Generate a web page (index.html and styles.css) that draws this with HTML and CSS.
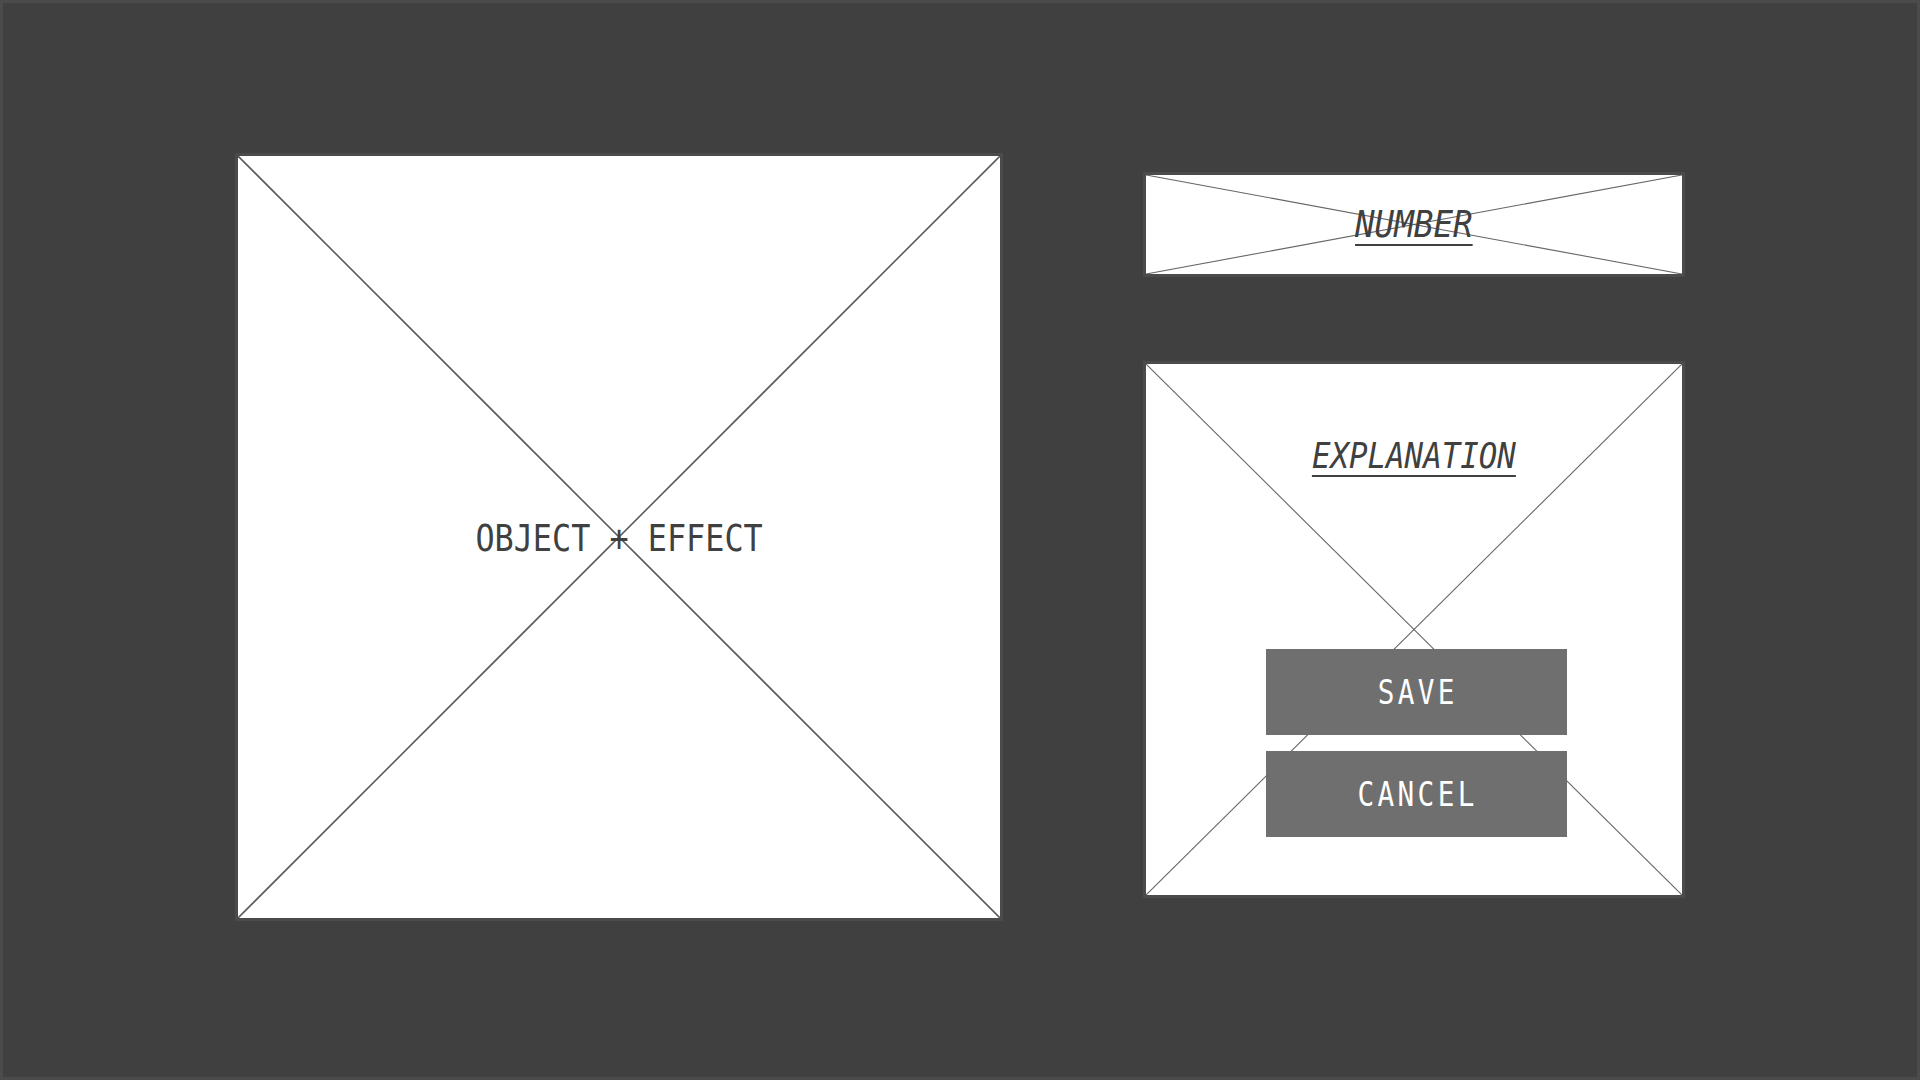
FILE: index.html
```html
<!DOCTYPE html>
<html lang="en">
<head>
    <meta charset="UTF-8">
    <meta name="viewport" content="width=device-width, initial-scale=1.0">
    <title>Object + Effect</title>
    <link rel="stylesheet" href="styles.css">
</head>
<body>
    <main class="canvas">
        <section class="frame frame-big">
            <svg class="cross" viewBox="0 0 100 100" preserveAspectRatio="none">
                <line x1="0" y1="0" x2="100" y2="100"></line>
                <line x1="100" y1="0" x2="0" y2="100"></line>
            </svg>
            <span class="label label-main">OBJECT + EFFECT</span>
        </section>

        <div class="side">
            <section class="frame frame-number">
                <svg class="cross cross-thin" viewBox="0 0 100 100" preserveAspectRatio="none">
                    <line x1="0" y1="0" x2="100" y2="100"></line>
                    <line x1="100" y1="0" x2="0" y2="100"></line>
                </svg>
                <span class="label label-link">NUMBER</span>
            </section>

            <section class="frame frame-explain">
                <svg class="cross cross-thin" viewBox="0 0 100 100" preserveAspectRatio="none">
                    <line x1="0" y1="0" x2="100" y2="100"></line>
                    <line x1="100" y1="0" x2="0" y2="100"></line>
                </svg>
                <span class="label label-link label-small">EXPLANATION</span>
                <div class="buttons">
                    <button class="btn"><span class="btn-text">SAVE</span></button>
                    <button class="btn"><span class="btn-text">CANCEL</span></button>
                </div>
            </section>
        </div>
    </main>
</body>
</html>
```
FILE: styles.css
```css
html, body {
    margin: 0;
    padding: 0;
}
body {
    height: 100vh;
    box-sizing: border-box;
    background-color: #404040;
    border: 3px solid #4b4b4b;
    font-family: "DejaVu Sans Mono", "Liberation Mono", monospace;
    color: #404040;
}
.canvas {
    display: flex;
    align-items: flex-start;
    gap: 140px;
    padding: 150px 0 0 232px;
}
.frame {
    position: relative;
    background-color: #ffffff;
    border: 3px solid #4b4b4b;
}
.cross {
    position: absolute;
    left: 0;
    top: 0;
    width: 100%;
    height: 100%;
}
.cross line {
    stroke: #5c5c5c;
    stroke-width: 1.6;
    vector-effect: non-scaling-stroke;
}
.cross-thin line {
    stroke: #666666;
    stroke-width: 1.1;
}
.frame-big {
    width: 762px;
    height: 762px;
    display: flex;
    align-items: center;
    justify-content: center;
}
.label {
    position: relative;
    display: inline-block;
    font-size: 37px;
    line-height: 1;
    white-space: pre;
    transform: scaleX(0.86);
}
.label-main {
    margin-top: 2px;
}
.label-link {
    font-style: italic;
    text-decoration: underline;
    text-decoration-thickness: 2px;
    text-underline-offset: 7px;
    transform: scaleX(0.88);
}
.label-small {
    font-size: 35px;
}
.side {
    display: flex;
    flex-direction: column;
    gap: 84px;
    padding-top: 19px;
}
.frame-number {
    width: 536px;
    height: 99px;
    display: flex;
    align-items: center;
    justify-content: center;
}
.frame-explain {
    width: 536px;
    height: 531px;
    display: flex;
    flex-direction: column;
    align-items: center;
}
.frame-explain .label-small {
    margin-top: 75px;
}
.buttons {
    position: relative;
    margin-top: auto;
    margin-bottom: 58px;
    margin-left: 4px;
    display: flex;
    flex-direction: column;
    gap: 16px;
}
.btn {
    width: 301px;
    height: 86px;
    border: none;
    border-radius: 0;
    background-color: #6f6f6f;
    color: #ffffff;
    font-family: "DejaVu Sans Mono", "Liberation Mono", monospace;
    font-size: 33px;
    padding: 0;
    cursor: pointer;
}
.btn-text {
    display: inline-block;
    letter-spacing: 4px;
    margin-right: -4px;
    transform: scaleX(0.84);
}
```
